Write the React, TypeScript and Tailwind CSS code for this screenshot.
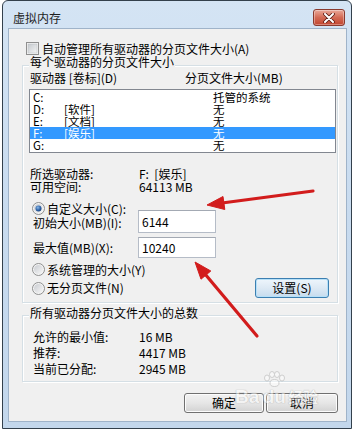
import React from "react";

function Radio({ checked, id }: { checked?: boolean; id: string }) {
  return (
    <svg width="13" height="13" viewBox="0 0 13 13" className="shrink-0">
      <defs>
        <linearGradient id={`rg-${id}`} x1="0" y1="0" x2="1" y2="1">
          <stop offset="0" stopColor="#c9ccd1" />
          <stop offset="1" stopColor="#f7f7f7" />
        </linearGradient>
        <radialGradient id={`rd-${id}`} cx="0.4" cy="0.35" r="0.7">
          <stop offset="0" stopColor="#8ab8e8" />
          <stop offset="0.6" stopColor="#2f64a8" />
          <stop offset="1" stopColor="#173f78" />
        </radialGradient>
      </defs>
      <circle cx="6.5" cy="6.5" r="6" fill="#f4f4f4" stroke="#8e8f8f" />
      <circle cx="6.5" cy="6.5" r="4.5" fill={`url(#rg-${id})`} />
      {checked && <circle cx="6.5" cy="6.5" r="3" fill={`url(#rd-${id})`} />}
    </svg>
  );
}

function Checkbox() {
  return (
    <svg width="13" height="13" viewBox="0 0 13 13" className="shrink-0">
      <defs>
        <linearGradient id="cb" x1="0" y1="0" x2="1" y2="1">
          <stop offset="0" stopColor="#c6cacf" />
          <stop offset="1" stopColor="#f3f3f3" />
        </linearGradient>
      </defs>
      <rect x="0.5" y="0.5" width="12" height="12" fill="#f6f6f6" stroke="#8f8f8f" />
      <rect x="2" y="2" width="9" height="9" fill="url(#cb)" stroke="#b9bcc0" strokeWidth="0.5" />
    </svg>
  );
}

const rows = [
  { d: "C:", l: "", s: "托管的系统", sel: false },
  { d: "D:", l: "[软件]", s: "无", sel: false },
  { d: "E:", l: "[文档]", s: "无", sel: false },
  { d: "F:", l: "[娱乐]", s: "无", sel: true },
  { d: "G:", l: "", s: "无", sel: false },
];

export default function App() {
  return (
    <div className="relative w-[353px] h-[431px] overflow-hidden bg-white font-['Noto_Sans_CJK_SC',sans-serif] text-[12px] leading-[14px] text-black">
      {/* window */}
      <div className="ml-[2px] w-[350px] h-[429px] border border-[#33404c] rounded-t-[6px] bg-gradient-to-b from-[#d4e4f4] via-[#c8dbef] to-[#c3d7ec] flex flex-col">
        {/* title bar */}
        <div className="h-[27px] shrink-0 flex items-start">
          <span className="ml-[10px] mt-[10px] leading-[14px] text-[#1e1e1e]">虚拟内存</span>
          <div className="ml-auto mr-[6px] mt-[8px] w-[32px] h-[17px] rounded-[3px] border border-[#8a3a2e] bg-gradient-to-b from-[#e9a899] via-[#d36a55] to-[#c2452f] flex items-center justify-center shadow-[inset_0_0_0_1px_rgba(255,255,255,0.35)]">
            <svg width="12" height="10" viewBox="0 0 12 10">
              <path d="M2 1 L10 9 M10 1 L2 9" stroke="#5a1a12" strokeWidth="3.6" strokeLinecap="round" />
              <path d="M2 1 L10 9 M10 1 L2 9" stroke="#ffffff" strokeWidth="2" strokeLinecap="round" />
            </svg>
          </div>
        </div>

        {/* content */}
        <div className="relative ml-[5px] w-[339px] h-[394px] border border-[#9fb3c9] bg-[#f0f0f0] flex flex-col">
          {/* auto manage */}
          <div className="mt-[13px] h-[13px] ml-[17px] flex items-center gap-[3px]">
            <Checkbox />
            <span>自动管理所有驱动器的分页文件大小(A)</span>
          </div>

          {/* group 1 */}
          <div className="relative mt-[10px] ml-[13px] w-[316px] h-[238px] border border-[#d5dfe5] shadow-[inset_1px_1px_0_#ffffff,1px_1px_0_#ffffff] flex flex-col">
            <span className="absolute left-[6px] top-[-11px] px-[1px] bg-[#f0f0f0] leading-[14px]">
              每个驱动器的分页文件大小
            </span>
            <div className="mt-[5px] h-[14px] ml-[7px] flex">
              <span className="w-[155px]">驱动器 [卷标](D)</span>
              <span>分页文件大小(MB)</span>
            </div>
            <div className="mt-[4px] ml-[6px] w-[307px] h-[64px] border border-[#828790] bg-white pt-[1px] flex flex-col">
              {rows.map((r) => (
                <div
                  key={r.d}
                  className={`h-[12px] text-[11.5px] leading-[12px] flex items-center pl-[3px] ${r.sel ? "bg-[#3399ff] text-white" : ""}`}
                >
                  <span className="w-[31px]">{r.d}</span>
                  <span className="w-[149px]">{r.l}</span>
                  <span>{r.s}</span>
                </div>
              ))}
            </div>

            <div className="mt-[14px] ml-[7px] h-[13px] flex items-center">
              <span className="w-[109px]">所选驱动器:</span>
              <span>F:&nbsp;&nbsp;[娱乐]</span>
            </div>
            <div className="ml-[7px] h-[13px] flex items-center">
              <span className="w-[109px]">可用空间:</span>
              <span>64113 MB</span>
            </div>

            <div className="mt-[9px] ml-[9px] h-[13px] flex items-center gap-[2px]">
              <Radio checked id="a" />
              <span>自定义大小(C):</span>
            </div>
            <div className="mt-[-5px] ml-[10px] h-[23px] flex items-center">
              <span className="w-[105px] mt-[2px]">初始大小(MB)(I):</span>
              <div className="w-[78px] h-[23px] border border-[#b5bcc7] border-t-[#a3a9b3] bg-white flex items-center pl-[3px]">
                6144
              </div>
            </div>
            <div className="mt-[4px] ml-[10px] h-[21px] flex items-center">
              <span className="w-[105px]">最大值(MB)(X):</span>
              <div className="w-[78px] h-[21px] border border-[#b5bcc7] border-t-[#a3a9b3] bg-white flex items-center pl-[3px]">
                10240
              </div>
            </div>
            <div className="mt-[5px] ml-[9px] h-[13px] flex items-center gap-[2px]">
              <Radio id="b" />
              <span>系统管理的大小(Y)</span>
            </div>
            <div className="mt-[2px] ml-[9px] h-[20px] flex items-center">
              <Radio id="c" />
              <span className="ml-[2px]">无分页文件(N)</span>
              <div className="ml-auto mr-[8px] w-[74px] h-[20px] rounded-[3px] border border-[#3c7fb1] bg-gradient-to-b from-[#eef6fc] via-[#dde9f4] to-[#c6dcee] shadow-[inset_0_0_0_1px_#b6e0f8] flex items-center justify-center">
                设置(S)
              </div>
            </div>
          </div>

          {/* group 2 */}
          <div className="relative mt-[12px] ml-[13px] w-[316px] h-[67px] border border-[#d5dfe5] shadow-[inset_1px_1px_0_#ffffff,1px_1px_0_#ffffff] flex flex-col">
            <span className="absolute left-[6px] top-[-10px] px-[1px] bg-[#f0f0f0] leading-[14px]">
              所有驱动器分页文件大小的总数
            </span>
            <div className="mt-[13px] ml-[10px] h-[16px] flex items-center">
              <span className="w-[106px]">允许的最小值:</span>
              <span>16 MB</span>
            </div>
            <div className="ml-[10px] h-[16px] flex items-center">
              <span className="w-[106px]">推荐:</span>
              <span>4417 MB</span>
            </div>
            <div className="ml-[10px] h-[16px] flex items-center">
              <span className="w-[106px]">当前已分配:</span>
              <span>2945 MB</span>
            </div>
          </div>

          {/* buttons */}
          <div className="mt-[11px] h-[20px] flex justify-end pr-[8px] gap-[2px]">
            <div className="w-[80px] h-[20px] rounded-[3px] border border-[#707070] bg-gradient-to-b from-[#f2f2f2] via-[#e6e6e6] to-[#d2d2d2] shadow-[inset_0_0_0_1px_#fcfcfc] flex items-center justify-center">
              确定
            </div>
            <div className="w-[72px] h-[20px] rounded-[3px] border border-[#707070] bg-gradient-to-b from-[#f2f2f2] via-[#e6e6e6] to-[#d2d2d2] shadow-[inset_0_0_0_1px_#fcfcfc] flex items-center justify-center">
              取消
            </div>
          </div>

          {/* watermark */}
          <div className="absolute left-[226px] top-[342px] flex items-end opacity-50 pointer-events-none font-['Liberation_Sans',sans-serif] font-bold text-[19px] leading-[20px] text-white [text-shadow:0_0_1px_#8a8a8a,0_0_1px_#8a8a8a]">
            <span>Ba</span>
            <span className="ml-[3px] flex flex-col items-center">
              <svg width="24" height="16" viewBox="0 0 24 16">
                <g fill="#ffffff" stroke="#9a9a9a" strokeWidth="0.8">
                  <ellipse cx="5" cy="7" rx="2.5" ry="3" />
                  <ellipse cx="10" cy="3.5" rx="2.5" ry="3" />
                  <ellipse cx="15" cy="3.5" rx="2.5" ry="3" />
                  <ellipse cx="20" cy="7" rx="2.5" ry="3" />
                  <ellipse cx="12.5" cy="12" rx="4.5" ry="3.5" />
                </g>
              </svg>
              <span>du</span>
            </span>
            <span className="ml-[2px] font-['Noto_Sans_CJK_SC',sans-serif] text-[15px]">经验</span>
          </div>
        </div>
      </div>

      {/* red arrows */}
      <svg className="absolute inset-0 pointer-events-none" width="353" height="431" viewBox="0 0 353 431">
        <g fill="#d21c1c" stroke="#d21c1c">
          <line x1="313" y1="191" x2="222" y2="203" strokeWidth="3.2" strokeLinecap="round" />
          <polygon points="207,205 223,196.5 224.8,209.5" strokeWidth="1" strokeLinejoin="round" />
          <line x1="257" y1="336" x2="205" y2="274" strokeWidth="3.2" strokeLinecap="round" />
          <polygon points="195,262 210.8,271 201,279.2" strokeWidth="1" strokeLinejoin="round" />
        </g>
      </svg>
    </div>
  );
}
